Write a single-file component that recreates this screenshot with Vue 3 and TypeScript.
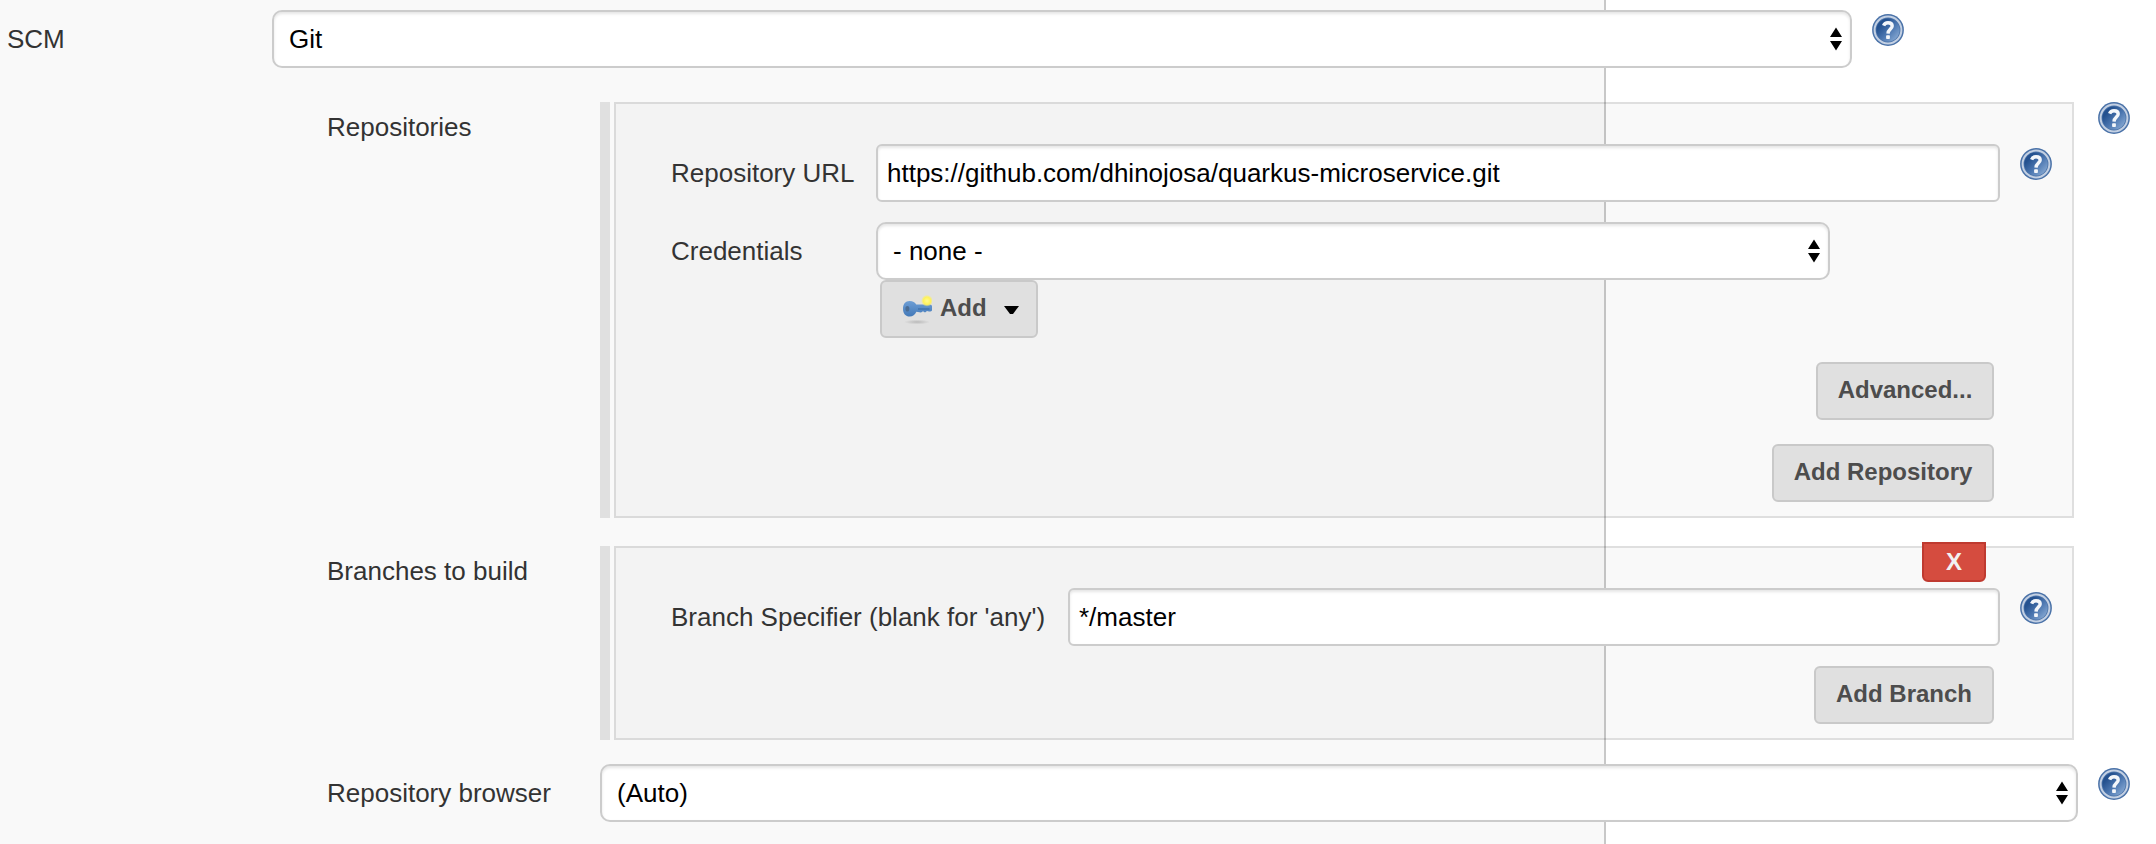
<script setup lang="ts">
import { defineComponent, h } from 'vue'

const Arrows = defineComponent({
  render: () =>
    h('svg', { class: 'arrows', width: 12, height: 24, viewBox: '0 0 12 24' }, [
      h('path', { d: 'M6 0.5L12 10H0z M6 23.5L12 14H0z', fill: '#000' }),
    ]),
})

const HelpIcon = defineComponent({
  render: () =>
    h('svg', { class: 'help', width: 32, height: 32, viewBox: '0 0 32 32', role: 'img', 'aria-label': 'Help' }, [
      h('circle', { cx: 16, cy: 16, r: 15.9, fill: '#4a72a8' }),
      h('circle', { cx: 16, cy: 16, r: 13.4, fill: '#4a72a8', stroke: '#c3d0e3', 'stroke-width': 2 }),
      h('circle', { cx: 16, cy: 16, r: 11.6, fill: 'url(#helpFill)' }),
      h('path', {
        d: 'M11.6 11.6C12.4 9.5 14 8.7 16 8.7C18.6 8.7 20.2 9.9 20.2 12C20.2 15 16.1 15.3 16 19.6',
        fill: 'none',
        stroke: '#f3f6fa',
        'stroke-width': 3.4,
      }),
      h('rect', { x: 14.1, y: 21.3, width: 3.8, height: 3.8, rx: 0.8, fill: '#f3f6fa' }),
    ]),
})
</script>

<template>
  <main class="page">
    <svg class="defs" width="0" height="0" aria-hidden="true">
      <defs>
        <linearGradient id="helpFill" x1="0.1" y1="0.15" x2="0.9" y2="0.9">
          <stop offset="0.15" stop-color="#24518f" />
          <stop offset="0.55" stop-color="#4b76b0" />
          <stop offset="1" stop-color="#86a8d2" />
        </linearGradient>
      </defs>
    </svg>

    <section class="row scm">
      <div class="label outer">SCM</div>
      <div class="field select scm-select"><span>Git</span><Arrows /></div>
      <HelpIcon />
    </section>

    <section class="row repos">
      <div class="label inner">Repositories</div>
      <div class="bar"></div>
      <div class="panel">
        <div class="line">
          <div class="label url-label">Repository URL</div>
          <div class="field"><span>https://github.com/dhinojosa/quarkus-microservice.git</span></div>
          <HelpIcon />
        </div>
        <div class="line credentials">
          <div class="label url-label">Credentials</div>
          <div class="cred-column">
            <div class="field select"><span>- none -</span><Arrows /></div>
            <button class="btn add" type="button">
              <svg class="key" width="32" height="32" viewBox="0 0 32 32">
                <defs>
                  <radialGradient id="glow">
                    <stop offset="0" stop-color="#fffb91" />
                    <stop offset="0.6" stop-color="#fff25a" />
                    <stop offset="1" stop-color="#fff25a" stop-opacity="0" />
                  </radialGradient>
                  <radialGradient id="shade">
                    <stop offset="0" stop-color="#b9b9b9" />
                    <stop offset="1" stop-color="#b9b9b9" stop-opacity="0" />
                  </radialGradient>
                  <linearGradient id="metal" x1="0" y1="0" x2="0" y2="1">
                    <stop offset="0" stop-color="#6d9ed5" />
                    <stop offset="1" stop-color="#4379b8" />
                  </linearGradient>
                </defs>
                <ellipse cx="17" cy="29" rx="13" ry="2.4" fill="url(#shade)" />
                <path
                  d="M9.5 8C13 8 15 9.5 16.2 11.5H29.8Q32 11.5 32 13.2V17.6Q31 19 29 18.4L27 18L25 19.4L23 18.2L21 19.4L16.4 18.8C15 21.9 12.8 23.6 9.8 23.6C5.5 23.6 3 20.4 3 15.8C3 11 5.5 8 9.5 8z"
                  fill="url(#metal)"
                />
                <path d="M18 16H29.5" stroke="#3d6da5" stroke-width="1.2" />
                <ellipse cx="7.4" cy="15.8" rx="2" ry="2.8" fill="#4a6c93" />
                <circle cx="27" cy="7.8" r="6" fill="url(#glow)" />
              </svg>
              <span>Add</span>
              <svg class="caret" width="15" height="8" viewBox="0 0 15 8"><path d="M0 0H15L9 8H6z" fill="#000" /></svg>
            </button>
          </div>
        </div>
        <div class="actions advanced"><button class="btn w-advanced" type="button">Advanced...</button></div>
        <div class="actions add-repo"><button class="btn w-repo" type="button">Add Repository</button></div>
      </div>
      <HelpIcon />
    </section>

    <section class="row branches">
      <div class="label inner">Branches to build</div>
      <div class="bar"></div>
      <div class="panel">
        <button class="delete" type="button">X</button>
        <div class="line">
          <div class="label branch-label">Branch Specifier (blank for 'any')</div>
          <div class="field"><span>*/master</span></div>
          <HelpIcon />
        </div>
        <div class="actions add-branch"><button class="btn w-branch" type="button">Add Branch</button></div>
      </div>
    </section>

    <section class="row browser">
      <div class="label inner">Repository browser</div>
      <div class="field select"><span>(Auto)</span><Arrows /></div>
      <HelpIcon />
    </section>
  </main>
</template>

<style>
body {
  margin: 0;
  background: #fff;
}
</style>

<style scoped>
.page,
.page * {
  box-sizing: border-box;
}
.page {
  width: 2156px;
  height: 844px;
  padding-top: 10px;
  overflow: hidden;
  font: 26px/30px "Liberation Sans", Helvetica, Arial, sans-serif;
  color: #333;
  background: linear-gradient(to right, #f9f9f9 1604px, #c8c8c8 1604px, #c8c8c8 1606px, #fff 1606px);
}
.defs {
  position: absolute;
}
.row,
.line {
  display: flex;
  align-items: flex-start;
}
.label {
  flex: none;
  white-space: nowrap;
  padding-top: 14px;
}
.outer {
  width: 272px;
  padding-left: 7px;
}
.inner {
  width: 600px;
  padding-left: 327px;
}
.field {
  flex: 1;
  display: flex;
  align-items: center;
  height: 58px;
  padding: 0 9px;
  border: 2px solid #ccc;
  border-radius: 6px;
  background: #fff;
  box-shadow: inset 0 2px 3px rgba(0, 0, 0, 0.1);
  color: #000;
  white-space: nowrap;
}
.select {
  justify-content: space-between;
  padding: 0 8px 0 15px;
  border-radius: 10px;
}
:deep(.arrows) {
  display: block;
}
:deep(.help) {
  display: block;
  flex: none;
  margin: 4px 0 0 20px;
}
.scm-select {
  flex: none;
  width: 1580px;
}
.repos {
  height: 416px;
  margin-top: 34px;
}
.repos > .label,
.branches > .label {
  padding-top: 10px;
}
.bar {
  width: 10px;
  height: 100%;
  margin-right: 4px;
  background: #e0e0e0;
}
.panel {
  width: 1460px;
  height: 100%;
  padding: 40px 20px 0 55px;
  border: 2px solid rgba(0, 0, 0, 0.1);
  background: rgba(0, 0, 0, 0.025);
}
.repos > :deep(.help) {
  margin: 0 0 0 24px;
}
.url-label {
  width: 205px;
}
.credentials {
  margin-top: 20px;
}
.cred-column {
  width: 954px;
}
.btn {
  display: flex;
  align-items: center;
  justify-content: center;
  height: 58px;
  padding: 0 0 2px;
  border: 2px solid #c9c9c9;
  border-radius: 6px;
  background: #e0e0e0;
  color: #4d4d4d;
  font: bold 24px/28px "Liberation Sans", Helvetica, Arial, sans-serif;
  white-space: nowrap;
}
.add {
  width: 158px;
  margin-left: 4px;
  padding-left: 18px;
  justify-content: flex-start;
}
.key {
  margin: 2px 8px 0 0;
}
.key + span {
  width: 64px;
  text-align: left;
}
.caret {
  margin-top: 4px;
}
.actions {
  display: flex;
  justify-content: flex-end;
  padding-right: 58px;
}
.advanced {
  margin-top: 24px;
}
.add-repo {
  margin-top: 24px;
}
.w-advanced {
  width: 178px;
}
.w-repo {
  width: 222px;
}
.w-branch {
  width: 180px;
}
.branches {
  height: 194px;
  margin-top: 28px;
}
.branches .panel {
  position: relative;
}
.branch-label {
  width: 397px;
}
.add-branch {
  margin-top: 20px;
}
.delete {
  position: absolute;
  top: -6px;
  right: 86px;
  width: 64px;
  height: 40px;
  padding: 0;
  border: 2px solid #bf3a30;
  border-radius: 0 0 6px 6px;
  background: #d54c3f;
  color: #f2f2f2;
  font: bold 24px/34px "Liberation Sans", Helvetica, Arial, sans-serif;
}
.browser {
  margin-top: 24px;
  padding-right: 26px;
}
</style>
